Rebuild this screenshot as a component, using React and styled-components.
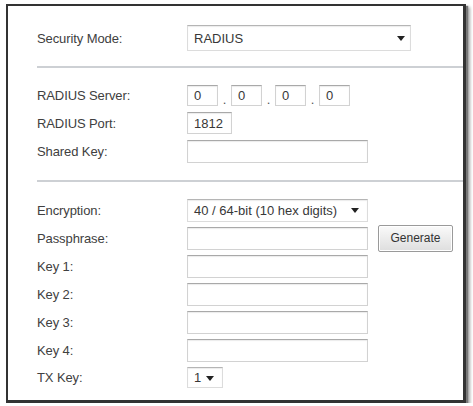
import styled, { createGlobalStyle } from 'styled-components';

const GlobalStyle = createGlobalStyle`
  html, body {
    margin: 0;
    padding: 0;
    background: #ffffff;
  }
  body {
    font-family: "Liberation Sans", Arial, sans-serif;
  }
`;

const Frame = styled.div`
  box-sizing: border-box;
  width: 460px;
  height: 399px;
  margin: 4px 0 0 6px;
  border: 2px solid #333;
  border-right-width: 3px;
  border-bottom-width: 3px;
  background: #fff;
  box-shadow: 2px 2px 1px #777, 4px 3px 3px rgba(0, 0, 0, 0.35);
  padding: 19px 0 0 29px;
  color: #404040;
  font-size: 13px;
`;

const Section = styled.div`
  display: flex;
  flex-direction: column;
`;

const Divider = styled.hr`
  border: none;
  height: 2px;
  background: #cdd0d4;
  margin: ${p => p.$top}px 0 ${p => p.$bottom}px 0;
`;

const Row = styled.div`
  display: flex;
  align-items: center;
  height: ${p => p.$h || 28}px;
`;

const Label = styled.div`
  width: 150px;
  flex-shrink: 0;
  letter-spacing: -0.1px;
`;

const Field = styled.div`
  box-sizing: border-box;
  width: ${p => p.$w}px;
  height: ${p => p.$h || 23}px;
  border: 1px solid #d2d2d2;
  border-top-color: #a9a9a9;
  box-shadow: inset 0 1px 1px rgba(0, 0, 0, 0.08);
  background: #fff;
  display: flex;
  align-items: center;
  padding: 0 6px;
  font-size: 13px;
  color: #383838;
`;

const Select = styled(Field)`
  justify-content: space-between;
  padding: 0 ${p => p.$pr || 8}px 0 6px;
  border-color: #dcdcdc;
  border-top-color: #b5b5b5;
`;

const Arrow = styled.span`
  width: 0;
  height: 0;
  border-left: 4px solid transparent;
  border-right: 4px solid transparent;
  border-top: 5px solid #222;
  margin-top: 1px;
`;

const Octets = styled.div`
  display: flex;
  align-items: flex-end;
`;

const Octet = styled.span`
  display: flex;
  align-items: flex-end;
`;

const Dot = styled.span`
  width: 13px;
  text-align: center;
  line-height: 12px;
  color: #555;
`;

const Button = styled.div`
  box-sizing: border-box;
  height: 27px;
  width: 75px;
  margin-left: 10px;
  border: 1px solid #9a9a9a;
  border-radius: 2px;
  background: linear-gradient(#fafafa, #dedede);
  box-shadow: inset 0 0 0 1px #fff;
  display: flex;
  align-items: center;
  justify-content: center;
  font-size: 12px;
  color: #333;
`;

const keys = ['Key 1:', 'Key 2:', 'Key 3:', 'Key 4:'];

export default function App() {
  return (
    <>
      <GlobalStyle />
      <Frame>
        <Section>
          <Row $h={26}>
            <Label>Security Mode:</Label>
            <Select $w={224} $h={26} $pr={5}>
              <span>RADIUS</span>
              <Arrow />
            </Select>
          </Row>
        </Section>

        <Divider $top={15} $bottom={13} />

        <Section>
          <Row>
            <Label>RADIUS Server:</Label>
            <Octets>
              {[0, 1, 2, 3].map(i => (
                <Octet key={i}>
                  {i > 0 && <Dot>.</Dot>}
                  <Field $w={31} $h={21}>0</Field>
                </Octet>
              ))}
            </Octets>
          </Row>
          <Row>
            <Label>RADIUS Port:</Label>
            <Field $w={45} $h={22}>1812</Field>
          </Row>
          <Row>
            <Label>Shared Key:</Label>
            <Field $w={181} />
          </Row>
        </Section>

        <Divider $top={15} $bottom={14} />

        <Section>
          <Row>
            <Label>Encryption:</Label>
            <Select $w={181}>
              <span>40 / 64-bit (10 hex digits)</span>
              <Arrow />
            </Select>
          </Row>
          <Row>
            <Label>Passphrase:</Label>
            <Field $w={181} />
            <Button>Generate</Button>
          </Row>
          {keys.map(k => (
            <Row key={k}>
              <Label>{k}</Label>
              <Field $w={181} />
            </Row>
          ))}
          <Row $h={27}>
            <Label>TX Key:</Label>
            <Select $w={36} $h={21}>
              <span>1</span>
              <Arrow />
            </Select>
          </Row>
        </Section>
      </Frame>
    </>
  );
}
